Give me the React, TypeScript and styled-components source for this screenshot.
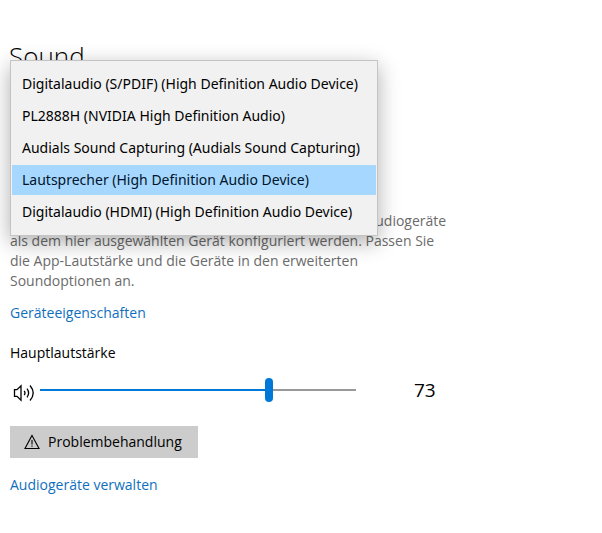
import React, { useState } from "react";
import styled, { createGlobalStyle } from "styled-components";

const GlobalStyle = createGlobalStyle`
  *, *::before, *::after { box-sizing: border-box; }
  body {
    margin: 0;
    background: #fff;
    color: #1a1a1a;
    font-family: "Open Sans", "Noto Sans", sans-serif;
    font-size: 14px;
    line-height: 20px;
  }
`;

const Page = styled.main`
  display: flex;
  flex-direction: column;
  align-items: flex-start;
  max-width: 455px;
  padding: 38px 0 36px 9px;
`;

const Title = styled.h1`
  margin: 0 0 90px;
  font-size: 26px;
  line-height: 36px;
  font-weight: 300;
  color: #000;
`;

const Field = styled.div`
  position: relative;
  width: 368px;
  max-width: 100%;
  margin: 0 0 15px 1px;
`;

const Label = styled.label`
  color: #000;
`;

const DeviceSelect = styled.select`
  display: block;
  width: 100%;
  height: 32px;
  padding: 0 8px;
  border: 2px solid #999;
  background: #fff;
  font: inherit;
`;

const Popup = styled.div`
  position: absolute;
  left: 0;
  right: 0;
  bottom: -40px;
  display: flex;
  flex-direction: column;
  gap: 2px;
  padding: 8px 1px 8px;
  border: 1px solid #c4c4c4;
  background: #f1f1f1;
  box-shadow: 0 6px 20px rgba(0, 0, 0, 0.32);
`;

const Option = styled.button<{ $selected: boolean }>`
  height: 30px;
  padding: 0 10px;
  border: 0;
  background: ${(p) => (p.$selected ? "#a6d8ff" : "transparent")};
  color: ${(p) => (p.$selected ? "#00142b" : "#000")};
  font: inherit;
  font-family: "Noto Sans", "Open Sans", sans-serif;
  text-align: left;
  white-space: nowrap;
`;

const Content = styled.section`
  display: flex;
  flex-direction: column;
  align-items: flex-start;
  width: 100%;
  padding-left: 1px;
`;

const Description = styled.p`
  margin: 0 0 12px;
  color: #6b6b6b;
`;

const TextLink = styled.a`
  color: #0f6fbf;
  text-decoration: none;
`;

const VolumeBlock = styled.div`
  display: flex;
  flex-direction: column;
  gap: 13px;
  width: 100%;
  margin: 20px 0 26px;
`;

const VolumeRow = styled.div`
  display: grid;
  grid-template-columns: 30px minmax(0, 1fr) 99px;
  align-items: center;
  height: 24px;
`;

const SpeakerButton = styled.button`
  display: flex;
  padding: 6px 0 0 3px;
  border: 0;
  background: none;
  color: #000;
`;

const Slider = styled.input`
  width: 100%;
  height: 24px;
  margin: 0;
  appearance: none;
  background: linear-gradient(#0078d7, #0078d7) left center / 73% 2px no-repeat,
    linear-gradient(#999, #999) center / 100% 2px no-repeat;

  &::-webkit-slider-thumb {
    appearance: none;
    width: 8px;
    height: 24px;
    border-radius: 4px;
    background: #0078d7;
  }
`;

const Value = styled.output`
  padding-left: 58px;
  font-size: 19px;
  line-height: 28px;
  color: #000;
`;

const ActionButton = styled.button`
  display: flex;
  align-items: center;
  gap: 8px;
  height: 32px;
  margin-bottom: 17px;
  padding: 0 16px 0 14px;
  border: 0;
  background: #ccc;
  color: #000;
  font: inherit;
`;

const SpeakerIcon = () => (
  <svg width="22" height="18" viewBox="0 0 22 18" fill="none" stroke="currentColor" strokeWidth="1.3" aria-hidden="true">
    <path d="M1.5 5.7H4L8 1.7V16.3L4 12.3H1.5Z" />
    <path d="M11.2 6.8Q12.8 9 11.2 11.2M14 4.6Q17.2 9 14 13.4M17 1.5Q23.4 9 17 16.5" />
  </svg>
);

const WarningIcon = () => (
  <svg width="16" height="16" viewBox="0 0 16 16" fill="none" stroke="currentColor" strokeWidth="1.1" aria-hidden="true">
    <path d="M8 1.5L15 14.5H1Z" />
    <path d="M8 6V10.5M8 11.6V12.8" />
  </svg>
);

const devices = [
  "Digitalaudio (S/PDIF) (High Definition Audio Device)",
  "PL2888H (NVIDIA High Definition Audio)",
  "Audials Sound Capturing (Audials Sound Capturing)",
  "Lautsprecher (High Definition Audio Device)",
  "Digitalaudio (HDMI) (High Definition Audio Device)",
];

export default function App() {
  const [device, setDevice] = useState(devices[3]);
  const [volume, setVolume] = useState(73);

  return (
    <>
      <GlobalStyle />
      <Page>
        <Title>Sound</Title>
        <Field>
          <DeviceSelect
            aria-label="Ausgabegerät auswählen"
            value={device}
            onChange={(e) => setDevice(e.target.value)}
          >
            {devices.map((name) => (
              <option key={name}>{name}</option>
            ))}
          </DeviceSelect>
          <Popup role="listbox" aria-label="Ausgabegerät auswählen">
            {devices.map((name) => (
              <Option
                key={name}
                type="button"
                role="option"
                aria-selected={name === device}
                $selected={name === device}
                onClick={() => setDevice(name)}
              >
                {name}
              </Option>
            ))}
          </Popup>
        </Field>
        <Content>
          <Description>
            Einige Apps können eventuell für die Nutzung anderer Audiogeräte als dem hier ausgewählten
            Gerät konfiguriert werden. Passen Sie die App-Lautstärke und die Geräte in den erweiterten
            Soundoptionen an.
          </Description>
          <TextLink href="#eigenschaften">Geräteeigenschaften</TextLink>
          <VolumeBlock>
            <Label htmlFor="volume">Hauptlautstärke</Label>
            <VolumeRow>
              <SpeakerButton type="button" aria-label="Stummschalten">
                <SpeakerIcon />
              </SpeakerButton>
              <Slider
                id="volume"
                type="range"
                min={0}
                max={100}
                value={volume}
                style={{ backgroundSize: `${volume}% 2px, 100% 2px` }}
                onChange={(e) => setVolume(Number(e.target.value))}
              />
              <Value htmlFor="volume">{volume}</Value>
            </VolumeRow>
          </VolumeBlock>
          <ActionButton type="button">
            <WarningIcon />
            Problembehandlung
          </ActionButton>
          <TextLink href="#verwalten">Audiogeräte verwalten</TextLink>
        </Content>
      </Page>
    </>
  );
}
